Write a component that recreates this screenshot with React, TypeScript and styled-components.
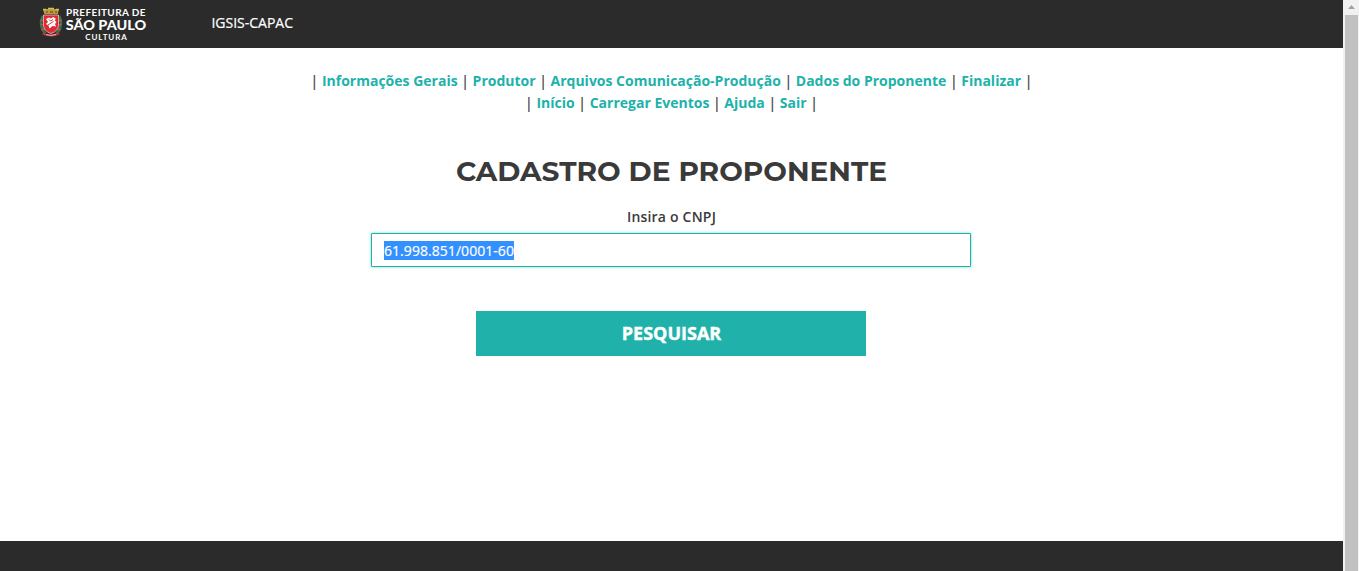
import React from "react";
import styled, { createGlobalStyle } from "styled-components";

const GlobalStyle = createGlobalStyle`
  *, *::before, *::after { box-sizing: border-box; }
  html, body { margin: 0; padding: 0; height: 100%; overflow: hidden; background: #fff; }
  body { font-family: "Open Sans", "Noto Sans", sans-serif; font-size: 14px; line-height: 22px; color: #3a3a3a; }
`;

const Frame = styled.div`
  display: flex;
  height: 571px;
  width: 1359px;
`;

const Page = styled.div`
  flex: 1;
  display: flex;
  flex-direction: column;
`;

const Header = styled.header`
  height: 48px;
  background: #2b2b2b;
  display: flex;
  align-items: flex-start;
  padding-left: 40px;
`;

const Logo = styled.svg`
  display: block;
  width: 110px;
  height: 48px;
  overflow: visible;
`;

const AppName = styled.span`
  margin: 12px 0 0 61.4px;
  color: #fff;
  -webkit-text-stroke: 0.2px #fff;
`;

const Main = styled.main`
  flex: 1;
  display: flex;
  flex-direction: column;
  align-items: center;
  padding-top: 22px;
`;

const Menu = styled.nav`
  display: flex;
  flex-direction: column;
  align-items: center;
`;

const MenuRow = styled.div`
  white-space: nowrap;
  -webkit-text-stroke: 0.2px #3a3a3a;
`;

const MenuLink = styled.a`
  color: #20b2aa;
  font-weight: 700;
  text-decoration: none;
  -webkit-text-stroke: 0;
`;

const Title = styled.h1`
  margin: 40px 0 0;
  font-family: Montserrat, Inter, sans-serif;
  font-size: 28px;
  font-weight: 700;
  line-height: 34px;
  white-space: nowrap;
`;

const Form = styled.form`
  display: flex;
  flex-direction: column;
  align-items: center;
  margin-top: 18px;
  padding-right: 1px;
`;

const Label = styled.label`
  padding-left: 1px;
  font-weight: 600;
  letter-spacing: 0.2px;
`;

const Field = styled.div`
  width: 600px;
  height: 34px;
  margin-top: 5px;
  padding: 0 12px;
  display: flex;
  align-items: center;
  border: 1px solid #20b2aa;
  border-radius: 1px;
  background: #fff;
  box-shadow: 0 0 3px rgba(32, 178, 170, 0.6);
`;

const Selected = styled.span`
  height: 19px;
  line-height: 19px;
  letter-spacing: 0.05px;
  background: #3390ff;
  color: #fff;
  -webkit-text-stroke: 0.2px #fff;
`;

const Submit = styled.button`
  width: 390px;
  height: 45px;
  margin-top: 44px;
  padding: 0 0 0 1px;
  border: 0;
  background: #20b2aa;
  color: #fff;
  font: 700 18px/45px "Open Sans", sans-serif;
  -webkit-text-stroke: 0.4px #fff;
`;

const Footer = styled.footer`
  height: 30px;
  background: #2b2b2b;
`;

const ScrollTrack = styled.div`
  width: 16px;
  background: #f1f1f1;
  display: flex;
  flex-direction: column;
  padding: 0 1px 0 2px;
`;

const ScrollArrow = styled.svg`
  display: block;
  width: 13px;
  height: 15px;
`;

const ScrollThumb = styled.div`
  flex: 1;
  background: #c1c1c1;
`;

const menuRows = [
  ["Informações Gerais", "Produtor", "Arquivos Comunicação-Produção", "Dados do Proponente", "Finalizar"],
  ["Início", "Carregar Eventos", "Ajuda", "Sair"],
];

function CityLogo() {
  return (
    <Logo viewBox="0 0 110 48">
      {/* mural crown */}
      <path d="M3 9h16l-1.200 5H4.400z" fill="#b99b3c" />
      <path d="M3 9.500h3m2-1h6m2 1h3" stroke="#d9bf62" strokeWidth="1.4" />
      <path d="M6 12h2m2 0h3m2 0h2" stroke="#5b4a22" strokeWidth="1.2" />
      {/* coffee branches */}
      <path d="M3 16C-.2 21 .5 29 5.500 33.500M19 16c3.200 5 2.500 13-2.500 17.500" fill="none" stroke="#2f7750" strokeWidth="2.6" />
      <path d="M.5 20l3 1m-3 3l3 1m-2 5l3-1M21.500 20l-3 1m3 3l-3 1m2 5l-3-1" stroke="#d54646" strokeWidth="1.5" />
      {/* shield */}
      <path d="M3.500 15h15v10q0 6-7.500 8.500-7.500-2.500-7.500-8.500z" fill="#e02a33" stroke="#f5d9d4" strokeWidth=".7" />
      <path d="M6 19l3-1.500 1.500 1 3-1.500 2.500 2-1.500 1.200 2 1.800-1.500 2 1 2.500-3.500-.5-3 2.500-1-3-2.500-1.500 2-2z" fill="#fff" />
      <path d="M9 19.500l1.500 1.500 2.500-1.500M8 25l5.500-3.500" fill="none" stroke="#c9383c" strokeWidth="1" />
      {/* ribbon */}
      <path d="M3 32.500Q7 34.800 11 34.500T19 32.500l.5 2Q11 38.500 2.500 34.500z" fill="#d92e37" />
      <path d="M6 34.500q5 1.800 10 0" fill="none" stroke="#f2cbc6" strokeWidth=".8" />
      <g fill="#fff" fontFamily="Lato, sans-serif">
        <text x="26" y="16.200" fontSize="10" fontWeight="700" textLength="79.500">PREFEITURA DE</text>
        <text x="25.700" y="29.800" fontSize="13.500" fontWeight="900" textLength="80.500" lengthAdjust="spacingAndGlyphs">SÃO PAULO</text>
        <text x="45.300" y="39.600" fontSize="8" fontWeight="700" textLength="41.500">CULTURA</text>
      </g>
    </Logo>
  );
}

export default function App() {
  return (
    <Frame>
      <GlobalStyle />
      <Page>
        <Header>
          <CityLogo />
          <AppName>IGSIS-CAPAC</AppName>
        </Header>
        <Main>
          <Menu>
            {menuRows.map((row) => (
              <MenuRow key={row[0]}>
                {"| "}
                {row.map((item) => (
                  <React.Fragment key={item}>
                    <MenuLink>{item}</MenuLink>
                    {" | "}
                  </React.Fragment>
                ))}
              </MenuRow>
            ))}
          </Menu>
          <Title>CADASTRO DE PROPONENTE</Title>
          <Form>
            <Label>Insira o CNPJ</Label>
            <Field>
              <Selected>61.998.851/0001-60</Selected>
            </Field>
            <Submit type="button">PESQUISAR</Submit>
          </Form>
        </Main>
        <Footer />
      </Page>
      <ScrollTrack>
        <ScrollArrow viewBox="0 0 13 15">
          <path d="M3 9l3.500-4L10 9z" fill="#a3a3a3" />
        </ScrollArrow>
        <ScrollThumb />
      </ScrollTrack>
    </Frame>
  );
}
